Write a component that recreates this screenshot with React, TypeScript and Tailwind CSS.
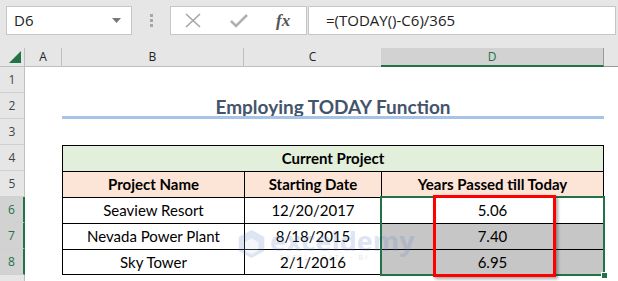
import React from 'react';

const GREEN = '#217346';
const uiFont = { fontFamily: '"Open Sans", "Noto Sans", sans-serif' };
const cellFont = { fontFamily: 'Lato, "Noto Sans", sans-serif' };

// widths: row header, A, B, C, D
const W = { hdr: 'w-[25px]', a: 'w-[37px]', b: 'w-[182px]', c: 'w-[137px]', d: 'w-[223px]' };

const RowHeader = ({ n, selected }: { n: number; selected?: boolean }) => (
  <div
    className={`${W.hdr} shrink-0 h-full flex items-center justify-center text-[12px] border-b border-[#d0d0d0] ${
      selected ? 'bg-[#d2d2d2] text-[#217346] border-r-2 border-r-[#217346]' : 'bg-[#e6e6e6] text-[#444] border-r border-r-[#bfbfbf]'
    }`}
    style={uiFont}
  >
    {n}
  </div>
);

const dataRows = [
  { n: 6, name: 'Seaview Resort', date: '12/20/2017', years: '5.06', gray: false },
  { n: 7, name: 'Nevada Power Plant', date: '8/18/2015', years: '7.40', gray: true },
  { n: 8, name: 'Sky Tower', date: '2/1/2016', years: '6.95', gray: true },
];

const App: React.FC = () => {
  return (
    <div className="w-[618px] h-[281px] overflow-hidden bg-white relative">
      {/* Formula bar */}
      <div className="h-[48px] bg-[#e6e6e6] flex items-start pt-[6px] pl-[6px]">
        <div className="w-[126px] h-[29px] bg-white border border-[#c6c6c6] flex items-center justify-between pl-[7px] pr-[10px]">
          <span className="text-[15px] text-[#222]" style={uiFont}>D6</span>
          <svg width="9" height="5" viewBox="0 0 9 5"><path d="M0 0h9L4.5 5z" fill="#777" /></svg>
        </div>
        <div className="w-[38px] h-[29px] flex flex-col items-center justify-center gap-[2px]">
          <span className="w-[3px] h-[3px] bg-[#a6a6a6]" />
          <span className="w-[3px] h-[3px] bg-[#a6a6a6]" />
          <span className="w-[3px] h-[3px] bg-[#a6a6a6]" />
        </div>
        <div className="w-[137px] h-[29px] bg-white border border-[#c6c6c6] flex items-center">
          <svg className="ml-[14px]" width="16" height="15" viewBox="0 0 16 15">
            <path d="M1 1l14 13M15 1L1 14" stroke="#a6a6a6" strokeWidth="1.6" fill="none" />
          </svg>
          <svg className="ml-[29px]" width="18" height="14" viewBox="0 0 18 14">
            <path d="M1 7l5 5L17 1" stroke="#b0b0b0" strokeWidth="2.6" fill="none" />
          </svg>
          <span className="ml-[28px] text-[17px] italic text-[#555] font-bold" style={{ fontFamily: '"Liberation Serif", serif' }}>
            fx
          </span>
        </div>
        <div className="ml-px w-[308px] h-[29px] bg-white border border-[#c6c6c6] flex items-center pl-[17px]">
          <span className="text-[15px] text-[#222]" style={uiFont}>=(TODAY()-C6)/365</span>
        </div>
      </div>

      {/* Column headers */}
      <div className="h-[19px] flex bg-[#e6e6e6] text-[12px] text-[#222]" style={uiFont}>
        <div className={`${W.hdr} shrink-0 flex items-end justify-end pr-[3px] pb-[3px] border-r border-[#bfbfbf] border-b border-b-[#bfbfbf]`}>
          <svg width="12" height="12" viewBox="0 0 12 12"><path d="M12 0v12H0z" fill={GREEN} /></svg>
        </div>
        <div className={`${W.a} shrink-0 flex items-center justify-center border-r border-[#bfbfbf] border-b border-b-[#bfbfbf]`}>A</div>
        <div className={`${W.b} shrink-0 flex items-center justify-center border-r border-[#bfbfbf] border-b border-b-[#bfbfbf]`}>B</div>
        <div className={`${W.c} shrink-0 flex items-center justify-center border-b border-b-[#bfbfbf]`}>C</div>
        <div className={`${W.d} shrink-0 flex items-center justify-center bg-[#d2d2d2] text-[#217346] border-b-2 border-b-[#217346] border-r border-r-[#9a9a9a]`}>D</div>
        <div className="flex-1 border-b border-b-[#9a9a9a]" />
      </div>

      {/* Sheet body */}
      <div className="text-[15px] text-black" style={cellFont}>
        <div className="h-[26px] flex"><RowHeader n={1} /></div>
        <div className="h-[26px] flex">
          <RowHeader n={2} />
          <div className={`${W.a} shrink-0`} />
          <div className="w-[542px] shrink-0 flex flex-col">
            <div className="flex-1 min-h-0 flex items-center justify-center pt-[3px] leading-none font-bold text-[19px] text-[#44546a]">
              Employing TODAY Function
            </div>
            <div className="h-[3px] shrink-0 bg-[#a6c4e6]" />
          </div>
        </div>
        <div className="h-[26px] flex"><RowHeader n={3} /></div>
        <div className="h-[26px] flex">
          <RowHeader n={4} />
          <div className={`${W.a} shrink-0`} />
          <div className="w-[542px] shrink-0 bg-[#e2efda] border border-black border-b-0 flex items-center justify-center font-bold">
            Current Project
          </div>
        </div>
        <div className="h-[26px] flex">
          <RowHeader n={5} />
          <div className={`${W.a} shrink-0`} />
          <div className="flex bg-[#fce4d6] font-bold border-t border-black">
            <div className={`${W.b} shrink-0 border-l border-black flex items-center justify-center`}>Project Name</div>
            <div className={`${W.c} shrink-0 border-l border-black flex items-center justify-center`}>Starting Date</div>
            <div className={`${W.d} shrink-0 border-l border-r border-black flex items-center justify-center`}>Years Passed till Today</div>
          </div>
        </div>
        {dataRows.map((r) => (
          <div key={r.n} className="h-[26px] flex">
            <RowHeader n={r.n} selected />
            <div className={`${W.a} shrink-0`} />
            <div className={`flex border-t border-black ${r.n === 8 ? 'border-b' : ''}`}>
              <div className={`${W.b} shrink-0 border-l border-black flex items-center justify-center`}>{r.name}</div>
              <div className={`${W.c} shrink-0 border-l border-black flex items-center justify-center`}>{r.date}</div>
              <div className={`${W.d} shrink-0 border-l border-r border-black flex items-center justify-center ${r.gray ? 'bg-[#c6c6c6]' : 'bg-white'}`}>
                {r.years}
              </div>
            </div>
          </div>
        ))}
        <div className="h-[26px] flex"><RowHeader n={9} /></div>
      </div>

      {/* Watermark */}
      <div className="absolute left-[238px] top-[230px] flex items-start gap-[5px] opacity-20 pointer-events-none">
        <svg width="27" height="28" viewBox="0 0 22 24">
          <path d="M11 0l11 6v12l-11 6L0 18V6z" fill="#5b7fc7" />
          <path d="M11 7l6 3.5v7L11 21l-6-3.5v-7z" fill="#c9d6f0" />
        </svg>
        <div className="flex flex-col leading-none -mt-[3px]">
          <span className="text-[27px] font-bold text-[#5b7fc7]" style={uiFont}>exceldemy</span>
          <span className="text-[7px] tracking-[2px] text-[#777] ml-[10px]" style={uiFont}>EXCEL · DATA · BI</span>
        </div>
      </div>

      {/* Selection D6:D8 */}
      <div className="absolute left-[380px] top-[196px] w-[225px] h-[80px] border-2 border-[#217346] pointer-events-none" />
      <div className="absolute left-[601px] top-[272px] w-[7px] h-[7px] bg-[#217346] border border-white" />

      {/* Red highlight */}
      <div className="absolute left-[433px] top-[195px] w-[123px] h-[82px] border-[3px] border-[#ff0000] shadow-[2px_2px_3px_rgba(0,0,0,0.35)]" />
    </div>
  );
};

export default App;
